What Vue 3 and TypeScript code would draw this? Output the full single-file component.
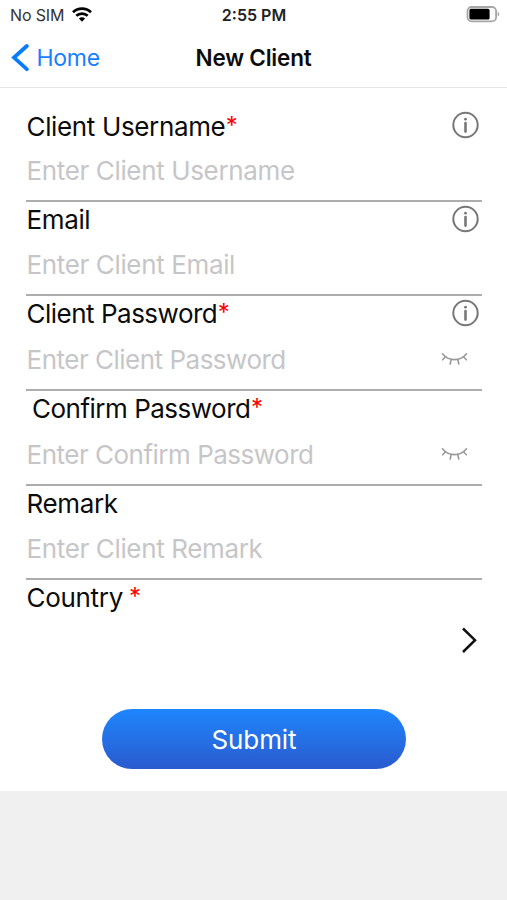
<script setup lang="ts">
import { reactive } from 'vue'

interface Field {
  id: string
  label: string
  placeholder: string
  required?: boolean
  info?: boolean
  secret?: boolean
}

const fields: Field[] = [
  { id: 'username', label: 'Client Username', placeholder: 'Enter Client Username', required: true, info: true },
  { id: 'email', label: 'Email', placeholder: 'Enter Client Email', info: true },
  { id: 'password', label: 'Client Password', placeholder: 'Enter Client Password', required: true, info: true, secret: true },
  { id: 'confirm', label: 'Confirm Password', placeholder: 'Enter Confirm Password', required: true, secret: true },
  { id: 'remark', label: 'Remark', placeholder: 'Enter Client Remark' },
]

const values = reactive<Record<string, string>>({})
</script>

<template>
  <div class="screen">
    <div class="status">
      <div class="carrier">
        <span>No SIM</span>
        <svg class="wifi" width="20" height="15" viewBox="0 0 20 15">
          <g fill="none" stroke="#000" stroke-width="2.7">
            <path d="M1 5.2C6 .4 14 .4 19 5.2" />
            <path d="M4.3 8.8c3.2-3 8.2-3 11.4 0" />
          </g>
          <path d="M6.9 11.5c1.8-1.6 4.4-1.6 6.2 0L10 14.7z" fill="#000" />
        </svg>
      </div>
      <div class="time">2:55 PM</div>
      <svg class="battery" width="34" height="18" viewBox="0 0 34 18">
        <rect x="1.5" y="1" width="28.6" height="14.4" rx="4.2" fill="#fff" stroke="#a6a6a6" stroke-width="1.8" />
        <rect x="3.4" y="2.8" width="20.2" height="10.8" rx="1.6" fill="#000" />
        <path d="M31.7 5.8c2 .8 2 3.8 0 4.6z" fill="#a6a6a6" />
      </svg>
    </div>

    <header class="nav">
      <button class="back">
        <svg width="18" height="30" viewBox="0 0 18 30">
          <path d="M15.8 3 3 14.6l12.8 11.6" fill="none" stroke="#087cff" stroke-width="3.8" stroke-linecap="round" stroke-linejoin="miter" />
        </svg>
        <span>Home</span>
      </button>
      <h1>New Client</h1>
    </header>

    <main class="form">
      <div v-for="f in fields" :key="f.id" class="field" :class="f.id">
        <div class="label-row">
          <label :for="f.id">{{ f.label }}<span v-if="f.required" class="star">*</span></label>
          <svg v-if="f.info" class="info" width="28" height="28" viewBox="0 0 28 28">
            <circle cx="13.5" cy="14" r="12.2" fill="none" stroke="#777" stroke-width="2" />
            <circle cx="13.5" cy="8.2" r="1.4" fill="#777" />
            <path d="M13.5 12v8.6" stroke="#777" stroke-width="2.6" stroke-linecap="round" />
          </svg>
        </div>
        <div class="input-row">
          <input :id="f.id" v-model="values[f.id]" :type="f.secret ? 'password' : 'text'" :placeholder="f.placeholder" />
          <svg v-if="f.secret" class="eye" width="27" height="14" viewBox="0 0 27 14">
            <g fill="none" stroke="#999" stroke-width="1.6" stroke-linecap="round">
              <path d="M1.5 1.8c6 7.8 18 7.8 24 0" />
              <path d="M4.6 4.8 1.6 7.8M10.2 7.6l-1 4.4M16.8 7.6l1 4.4M22.4 4.8l3 3" />
            </g>
          </svg>
        </div>
      </div>

      <div class="country">
        <div class="label-row"><label>Country <span class="star">*</span></label></div>
        <button class="picker">
          <svg width="18" height="28" viewBox="0 0 18 28">
            <path d="m3 2.5 12 11.7L3 26" fill="none" stroke="#111" stroke-width="2.5" />
          </svg>
        </button>
      </div>

      <button class="submit">Submit</button>
    </main>
  </div>
</template>

<style>
body {
  background: #f0f0f0;
}
</style>

<style scoped>
.screen {
  width: 507px;
  height: 791px;
  background: #fff;
  font-family: Inter, 'Liberation Sans', sans-serif;
  color: #0c0c0c;
  overflow: hidden;
}
button {
  border: 0;
  padding: 0;
  background: none;
  font: inherit;
}
.status {
  display: grid;
  grid-template-columns: 1fr auto 1fr;
  align-items: center;
  height: 29px;
  padding: 0 8px 0 10px;
  font-size: 16px;
}
.carrier {
  display: flex;
  align-items: center;
  gap: 7.5px;
  color: #333;
  letter-spacing: -0.15px;
}
.time {
  font-weight: 600;
  color: #222;
  padding-right: 1px;
}
.battery {
  justify-self: end;
  margin-right: -1px;
}
.nav {
  display: grid;
  grid-template-columns: 1fr auto 1fr;
  align-items: center;
  height: 58px;
  border-bottom: 1px solid #e6e6e6;
}
.back {
  display: flex;
  align-items: center;
  gap: 8px;
  padding-left: 10.5px;
  font-size: 23px;
  letter-spacing: -0.3px;
  color: #1780ff;
}
h1 {
  margin: 0;
  font-size: 22.5px;
  font-weight: 600;
  letter-spacing: -0.2px;
  line-height: 58px;
}
.form {
  display: flex;
  flex-direction: column;
  padding: 20px 25px 0 26px;
}
.field {
  display: flex;
  flex-direction: column;
  height: 94px;
  box-sizing: border-box;
  border-bottom: 2px solid #adadad;
  letter-spacing: -0.36px;
}
.password,
.confirm {
  height: 95px;
  letter-spacing: -0.5px;
}
.label-row {
  display: flex;
  align-items: flex-start;
  justify-content: space-between;
  height: 37px;
  font-size: 26px;
}
label {
  line-height: 36px;
  padding-left: 0.5px;
}
.username label {
  line-height: 38px;
}
.confirm label {
  padding-left: 6px;
}
.star {
  display: inline-block;
  line-height: 20px;
  font-size: 24px;
  color: #f00;
  transform: translate(0.5px, -2px);
}
.country .star {
  transform: translate(-1px, -2px);
}
.info {
  margin: 3px 2.5px 0 0;
}
.input-row {
  display: flex;
  align-items: center;
  height: 51px;
}
input {
  flex: 1;
  min-width: 0;
  height: 51px;
  border: 0;
  padding: 0 0 0 0.5px;
  outline: none;
  background: none;
  font: 26px Inter, 'Liberation Sans', sans-serif;
  letter-spacing: inherit;
}
.password input,
.confirm input {
  padding-top: 1px;
}
input::placeholder {
  color: #c6c6c8;
  opacity: 1;
}
.eye {
  margin-right: 14px;
}
.country {
  height: 129px;
  letter-spacing: -0.3px;
}
.picker {
  display: flex;
  justify-content: flex-end;
  width: 100%;
  padding: 9px 4px 0 0;
}
.submit {
  align-self: center;
  width: 304px;
  height: 60px;
  border-radius: 30px;
  background: linear-gradient(#1e86fd, #2b5ace);
  color: #fff;
  font-size: 26px;
  letter-spacing: -0.1px;
}
</style>
